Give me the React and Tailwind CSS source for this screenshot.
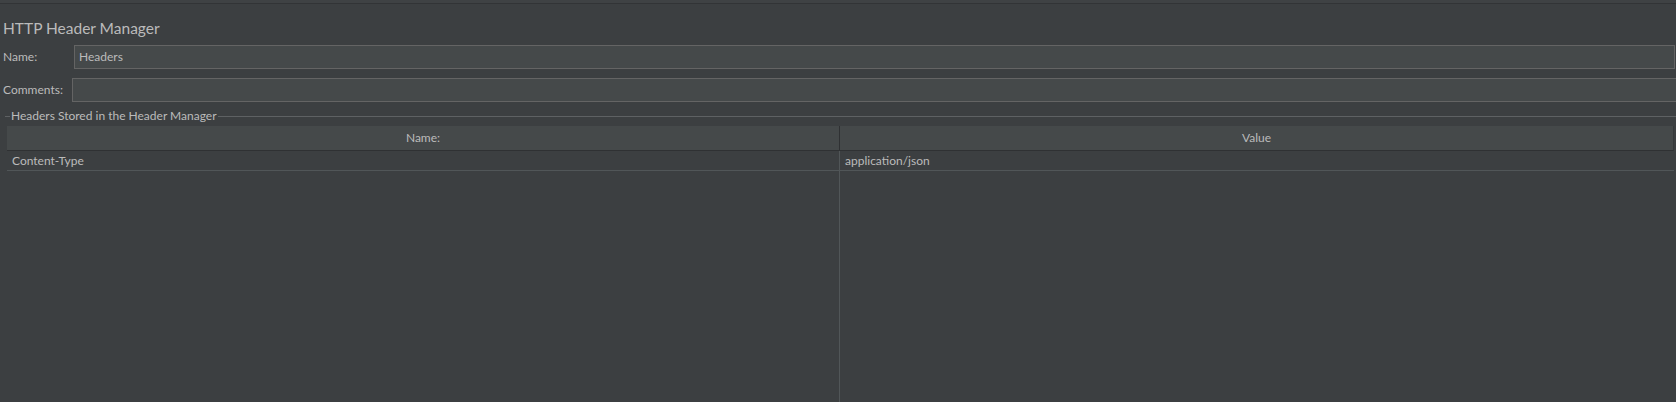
export default function App() {
  return (
    <div className="w-full h-[402px] overflow-hidden bg-[#3c3f41] text-[#bbbbbb] text-[12px] font-['Lato',sans-serif] flex flex-col">
      <div className="h-[4px] shrink-0 bg-[#3f4244] border-b border-[#323436]" />

      <div className="pl-[3px] pt-[13px] h-[41px] text-[15.5px] leading-[22px] shrink-0">HTTP Header Manager</div>

      <div className="flex items-center h-[24px] shrink-0">
        <div className="w-[74px] pl-[3px]">Name:</div>
        <div className="flex-1 mr-[1px] h-[24px] bg-[#45494a] border border-[#646464] flex items-center pl-[4px]">Headers</div>
      </div>

      <div className="flex items-center h-[24px] mt-[9px] shrink-0">
        <div className="w-[72px] pl-[3px]">Comments:</div>
        <div className="flex-1 -mr-[2px] h-[24px] bg-[#45494a] border border-[#646464]" />
      </div>

      <div className="flex items-center h-[14px] mt-[7px] shrink-0">
        <div className="w-[5px] ml-[5px] h-px bg-[#5e6163]" />
        <span className="px-[1px] leading-[14px]">Headers Stored in the Header Manager</span>
        <div className="flex-1 h-px bg-[#5e6163]" />
      </div>

      <div className="flex-1 ml-[7px] mr-[2px] mt-[3px] flex flex-col">
        <div className="grid grid-cols-[833px_1fr] h-[25px] bg-[#45494a] border-b border-[#2f3133] border-r border-r-[#36393b] shrink-0">
          <div className="flex items-center justify-center border-r border-[#2f3133]">Name:</div>
          <div className="flex items-center justify-center">Value</div>
        </div>
        <div className="grid grid-cols-[833px_1fr] flex-1">
          <div className="border-r border-[#515658] flex flex-col">
            <div className="h-[20px] border-b border-[#515658] flex items-center pl-[5px]">Content-Type</div>
          </div>
          <div className="flex flex-col">
            <div className="h-[20px] border-b border-[#515658] flex items-center pl-[5px]">application/json</div>
          </div>
        </div>
      </div>
    </div>
  );
}
